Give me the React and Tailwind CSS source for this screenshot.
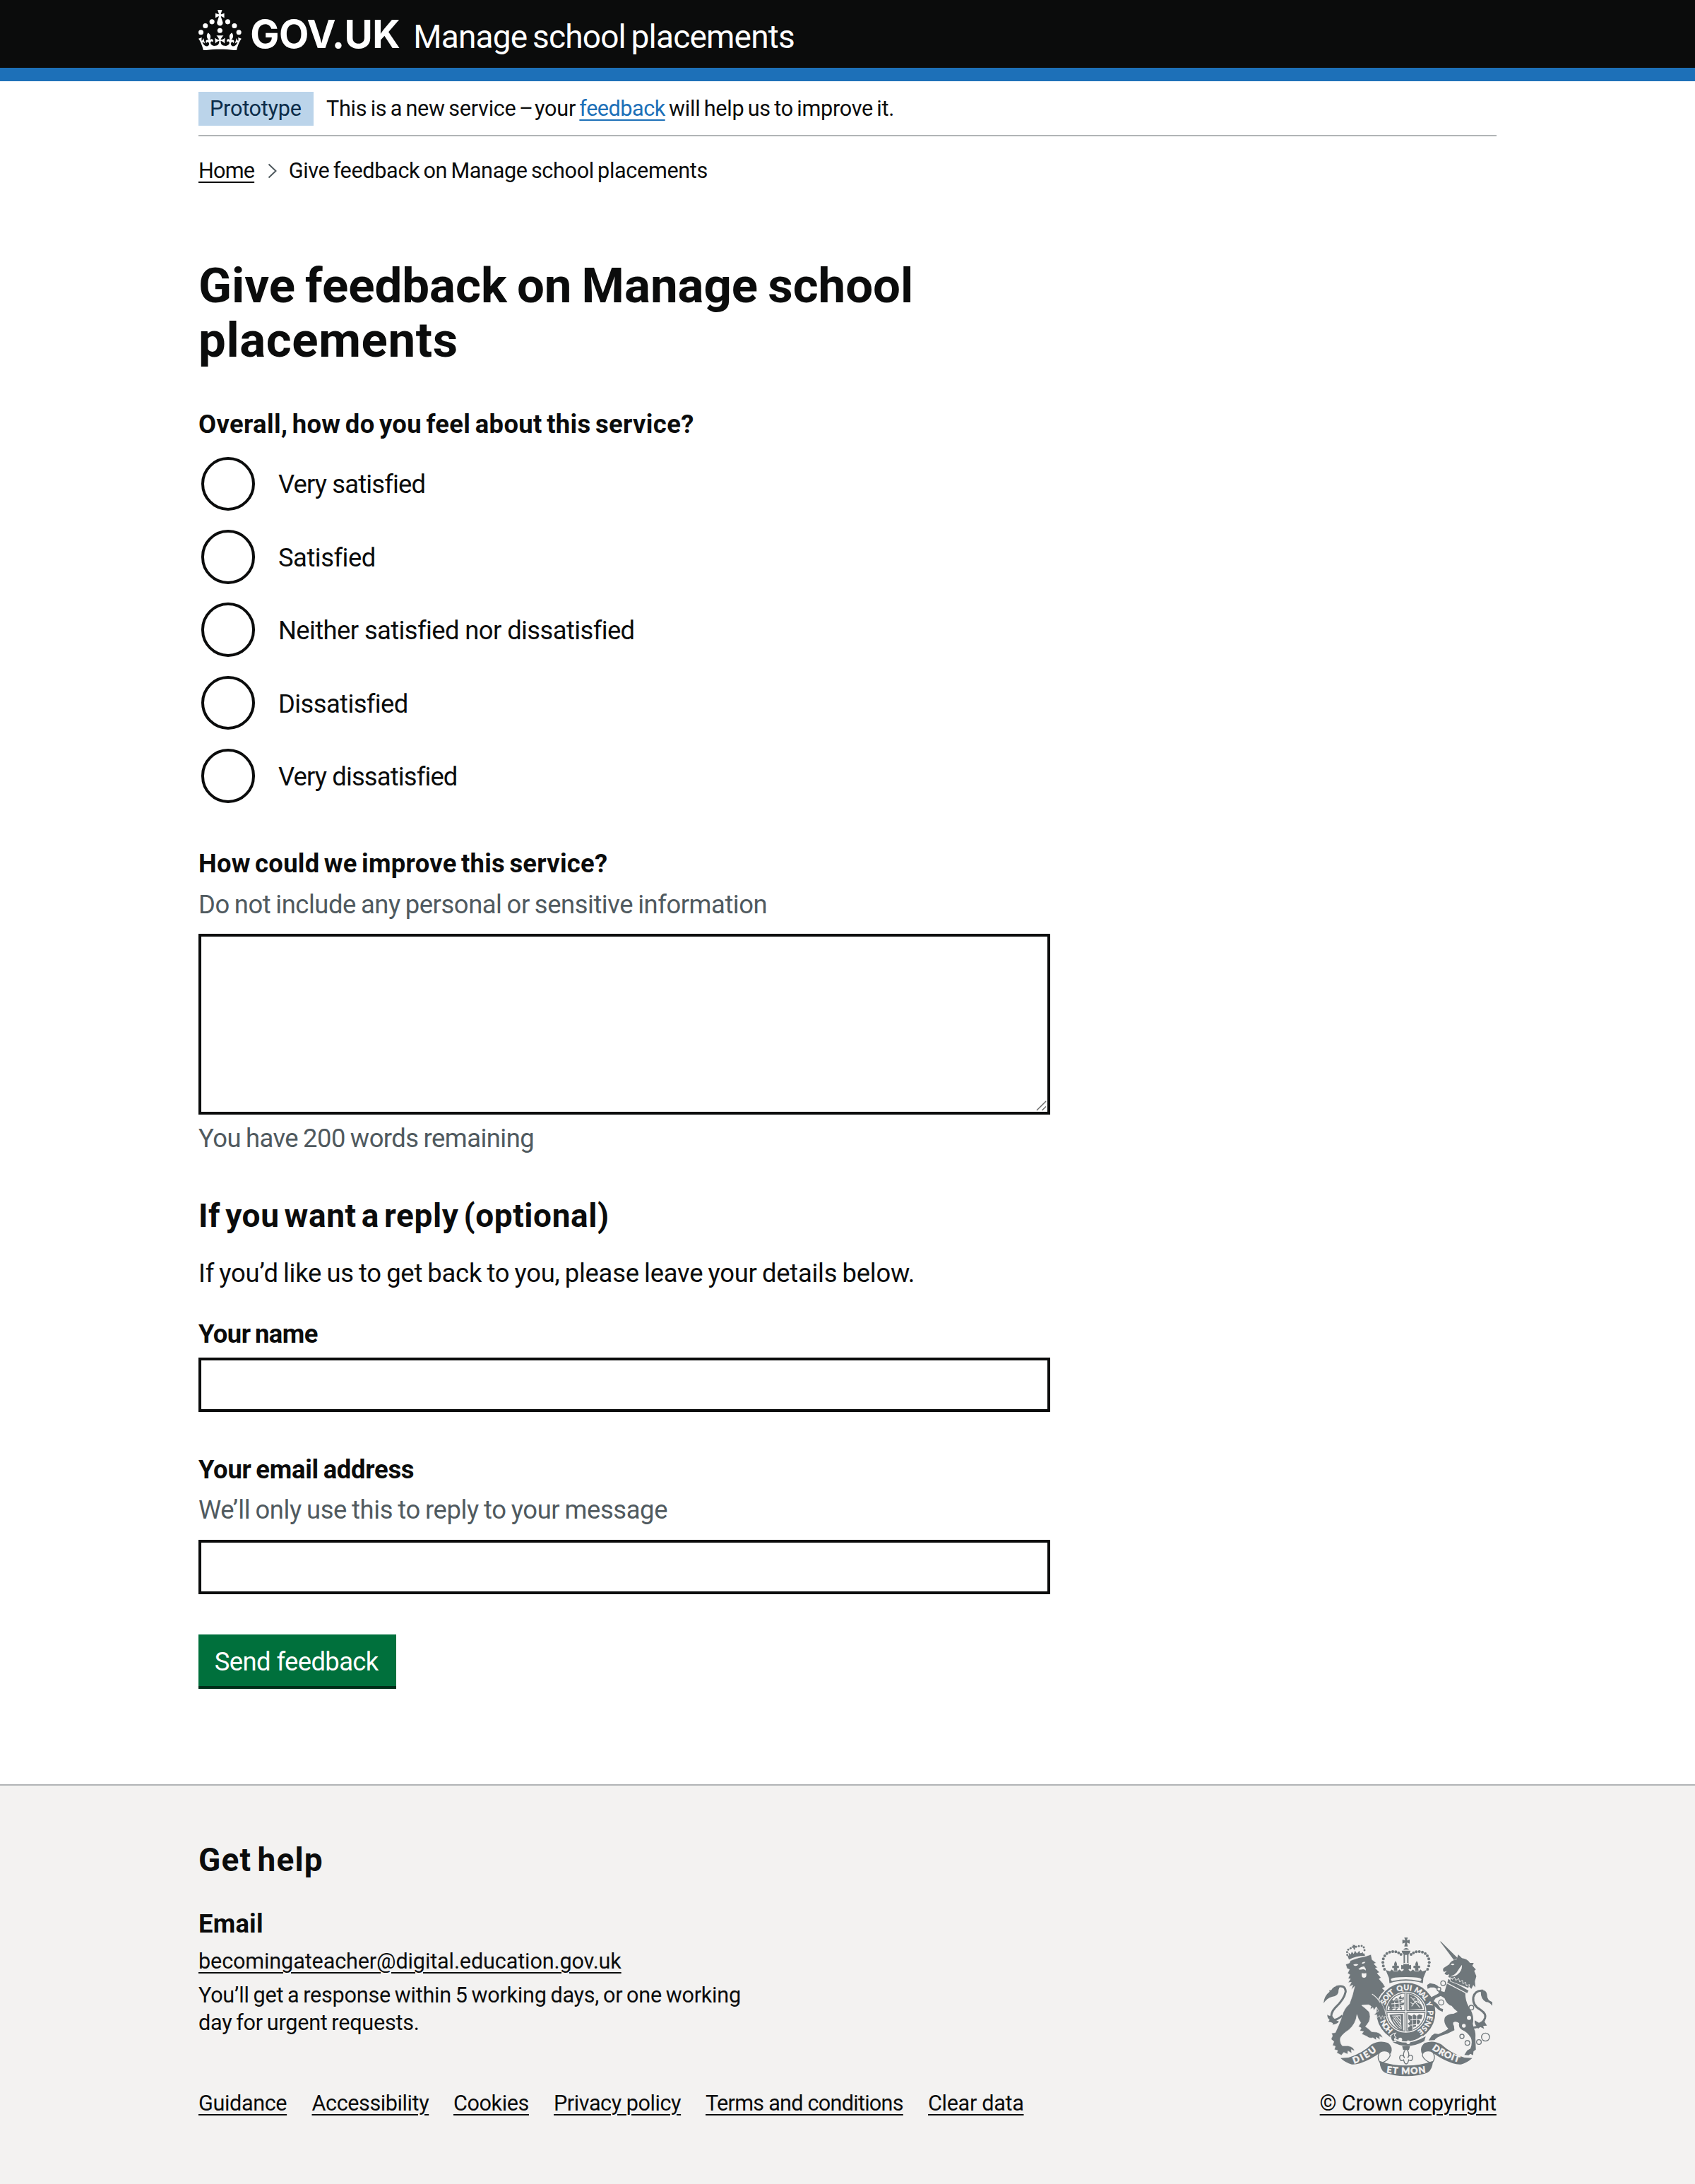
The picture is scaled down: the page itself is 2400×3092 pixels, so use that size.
import React from "react";

const LINK = "underline decoration-2 underline-offset-[5px]";

const CROWN_PATH =
  "M33.1,9.8c.2-.1.3-.3.5-.5l4.6,2.4v-6.8l-4.6,1.5c-.1-.2-.3-.3-.5-.5l1.9-5.9h-6.7l1.9,5.9c-.2.1-.3.3-.5.5l-4.6-1.5v6.8l4.6-2.4c.1.2.3.3.5.5l-2.6,8c-.9,2.8,1.2,5.7,4.1,5.7h0c3,0,5.1-2.9,4.1-5.7l-2.6-8ZM37,37.9s-3.4,3.8-4.1,6.1c2.2,0,4.2-.5,6.4-2.8l-.7,8.5c-2-2.8-4.4-4.1-5.7-3.8.1,3.1.5,6.7,5.8,7.2,3.7.3,6.7-1.5,7-3.8.4-2.6-2-4.3-3.7-1.6-1.4-4.5,2.4-6.1,4.9-3.2-1.9-4.5-1.8-7.7,2.4-10.9,3,4,2.6,7.3-1.2,11.1,2.4-1.3,6.2,0,4,4.6-1.2-2.8-3.7-2.2-4.2.2-.3,1.7.7,3.7,3,4.2,1.9.3,4.7-.9,7-5.9-1.3,0-2.4.7-3.9,1.7l2.4-8c.6,2.3,1.4,3.7,2.2,4.5.6-1.6.5-2.8,0-5.3l5,1.8c-2.6,3.6-5.2,8.7-7.3,17.5-7.4-1.1-15.7-1.7-24.5-1.7h0c-8.8,0-17.1.6-24.5,1.7-2.1-8.9-4.7-13.9-7.3-17.5l5-1.8c-.5,2.5-.6,3.7,0,5.3.8-.8,1.6-2.3,2.2-4.5l2.4,8c-1.5-1-2.6-1.7-3.9-1.7,2.3,5,5.2,6.2,7,5.9,2.3-.4,3.3-2.4,3-4.2-.5-2.4-3-3.1-4.2-.2-2.2-4.6,1.6-6,4-4.6-3.7-3.7-4.2-7.1-1.2-11.1,4.2,3.2,4.3,6.4,2.4,10.9,2.5-2.8,6.3-1.3,4.9,3.2-1.8-2.7-4.1-1-3.7,1.6.3,2.3,3.3,4.1,7,3.8,5.4-.5,5.7-4.2,5.8-7.2-1.3-.2-3.7,1-5.7,3.8l-.7-8.5c2.2,2.3,4.2,2.7,6.4,2.8-.7-2.3-4.1-6.1-4.1-6.1h10.6,0Z";

const CROWN_DOTS = [
  [20, 17.6],
  [10.2, 23.5],
  [3.7, 33.2],
  [31.7, 30.6],
  [43.3, 17.6],
  [53.2, 23.5],
  [59.7, 33.2],
];

function Crown() {
  return (
    <svg viewBox="0 0 64 60" className="h-[57.5px] w-[61.3px] shrink-0 fill-white" aria-hidden="true">
      {CROWN_DOTS.map(([x, y]) => (
        <circle key={`${x}-${y}`} cx={x} cy={y} r="3.7" />
      ))}
      <path d={CROWN_PATH} />
    </svg>
  );
}

const G = "#6f777b";
const L = "#f3f2f1";

const BIG_CROWN_DOTS = [
  [361, 203], [356, 189], [354, 174], [356, 159], [362, 146], [371, 136], [383, 130], [396, 128], [409, 129], [421, 133], [431, 140],
];
const SMALL_CROWN_DOTS = [
  [113, 88], [112, 76], [117, 66], [127, 60], [150, 54], [162, 51], [174, 50], [183, 56], [186, 68],
];
const RINGS = [
  [160, 208, 10], [142, 233, 8], [152, 290, 11], [280, 312, 10], [240, 434, 9], [263, 462, 10], [312, 458, 10], [340, 437, 17],
];

function RoyalArms() {
  return (
    <svg viewBox="102 68 718 590" className="h-[196.7px] w-[239.4px]" aria-hidden="true">
      <defs>
        <path id="garter" d="M452 478 A93 93 0 1 1 452.1 478" />
        <path id="dieu" d="M232 604 Q284 588 336 543" />
        <path id="mon" d="M366 641 Q452 655 540 641" />
        <path id="droit" d="M560 541 Q620 585 690 602" />
      </defs>

      {/* Garter and shield */}
      <circle cx="452" cy="385" r="106" fill="none" stroke={G} strokeWidth="38" />
      <circle cx="452" cy="385" r="81" fill={L} stroke={G} strokeWidth="4" />
      <g fill={G}>
        <path d="M382 345 l10 -14 l8 6 l10 -12 l8 4 l12 -16 l4 12 l10 -6 l-2 14 l-12 6 l6 6 l10 0 l-4 10 l-14 2 l8 8 l-2 10 l-14 -8 l-10 10 l-8 -8 l-12 8 l-10 -4 l4 -10 l-6 -4z" />
        <path d="M464 308 Q505 316 524 372 L464 376z" />
        <path d="M382 396 L440 392 L440 466 Q398 452 382 396z" />
        <path d="M462 396 l16 6 l8 -8 l12 8 l10 -8 l14 4 l-4 16 l-12 2 l8 10 l-10 12 l-10 -6 l2 14 l-12 2 l-2 12 l-18 8 l-4 -16 l10 -8 l-10 -10 l10 -8 l-8 -12z" />
      </g>
      <g fill="none" stroke={L} strokeWidth="3">
        <path d="M472 320 L512 366 M476 360 L494 338 L516 350 M480 330 L492 328 M472 344 L484 352 M500 328 L506 342" />
        <path d="M394 402 L428 400 L432 456 M400 408 L428 446 M404 404 L430 436 M412 402 L430 424 M396 414 Q408 440 428 454" />
        <path d="M390 350 L436 346 M392 364 L434 366 M404 334 L438 330 M470 418 L514 416 M470 440 L506 438 M478 400 L482 462 M498 400 L496 450 M404 340 L406 374 M422 326 L424 372" />
      </g>
      <path d="M452 306 V466 M372 383 H534" stroke={G} strokeWidth="12" />
      <path d="M452 304 V470 M370 383 H536" stroke={L} strokeWidth="4" />
      <g fill={L} stroke={L} strokeWidth="1" fontFamily="Lato, sans-serif" fontWeight="900" fontSize="32">
        <text><textPath href="#garter" startOffset="58" textLength="58">HON</textPath></text>
        <text><textPath href="#garter" startOffset="176" textLength="66">SOIT</textPath></text>
        <text><textPath href="#garter" startOffset="255" textLength="60">QUI</textPath></text>
        <text><textPath href="#garter" startOffset="325" textLength="63">MAL</textPath></text>
        <text><textPath href="#garter" startOffset="396">Y</textPath></text>
        <text><textPath href="#garter" startOffset="431" textLength="102">PENSE</textPath></text>
      </g>
      <path d="M384 484 Q452 540 524 486" fill="none" stroke={L} strokeWidth="5" />
      <path d="M392 496 Q452 536 536 488 L530 508 Q456 548 396 512z" fill={G} />
      <path d="M408 474 Q384 478 388 496 Q392 514 410 510 Q396 500 410 492 Q398 484 408 474z" fill={G} stroke={L} strokeWidth="3" />
      <circle cx="428" cy="501" r="8" fill={L} />
      <circle cx="462" cy="513" r="8" fill={L} />

      {/* Imperial crown */}
      <g fill={G}>
        <path d="M366 206 L384 212 L392 204 L400 212 L416 212 L424 204 L434 212 L446 204 L460 204 L472 212 L482 204 L490 212 L506 212 L514 204 L522 212 L540 206 L526 240 L524 262 Q452 240 382 262 L380 240z" />
        {[408, 498].map((x) => (
          <path key={x} d={`M${x} 168 q9 12 5 20 q9 -3 10 6 q-2 6 -9 4 l2 12 h-16 l2 -12 q-7 2 -9 -4 q1 -9 10 -6 q-4 -8 5 -20z`} />
        ))}
        <path d="M440 178 Q453 184 466 178 Q460 190 474 184 V204 Q460 196 464 212 H442 Q446 196 432 204 V184 Q446 190 440 178z" />
        {BIG_CROWN_DOTS.map(([x, y]) => (
          <React.Fragment key={y + x}>
            <circle cx={x} cy={y} r="6" />
            <circle cx={905 - x} cy={y} r="6" />
          </React.Fragment>
        ))}
        <path d="M442 140 h6 v36 h-6z M457 140 h6 v36 h-6z" />
        <path d="M434 124 h37 q-2 18 -18 18 q-17 0 -19 -18z" />
        <path d="M440 120 q13 -16 26 0z" />
        <path d="M445 68 h15 l-4 13 l12 -4 v17 l-12 -4 l4 16 h-15 l4 -16 l-12 4 v-17 l12 4z" />
      </g>
      <path d="M388 246 Q392 236 452 236 Q514 236 518 246 Q518 256 504 252 Q452 240 400 252 Q388 256 388 246z" fill={L} />

      {/* Lion */}
      <g transform="translate(90 54)">
        <path
          fill={G}
          stroke={L}
          strokeWidth="2"
          d="M106 128 L122 122 L126 112 Q160 98 190 94 L214 86 L218 108 L236 122 L226 126 L242 142 L232 144 L250 162 L240 166 L256 184 L248 190 L264 208 L274 224 L262 230 L272 240 Q256 252 246 274 Q272 310 276 340 L284 352 L272 348 L270 360 L262 346 L256 362 L250 346 L240 354 L238 342 L226 344 L236 332 L246 326 L236 308 L226 324 L222 312 L210 320 L214 306 L204 300 Q190 300 174 302 Q190 314 206 330 Q214 350 206 370 Q196 386 190 392 Q205 402 216 414 L238 416 Q256 420 264 440 L250 434 L252 448 L236 438 L236 450 L222 440 Q206 444 196 434 L174 424 L182 414 L166 410 L172 398 L160 392 L170 376 Q158 360 154 342 Q150 380 120 406 Q92 424 84 440 Q80 460 92 474 L116 474 Q140 478 144 496 L130 490 L132 506 L116 496 L114 510 L98 502 L88 514 L68 504 L72 494 L58 490 L62 476 L50 472 L56 456 L44 446 L50 432 L46 420 L62 418 Q80 380 90 350 Q98 316 122 296 Q136 262 144 222 L130 236 L136 216 L120 224 L130 204 L116 206 L126 190 L116 188 L124 172 L114 166 L122 150 L112 146 Z"
        />
        <path d="M218 254 Q240 268 252 290" fill="none" stroke={L} strokeWidth="3" />
        <path d="M138 130 q12 10 22 -1 q-10 -6 -22 1z M174 124 q10 4 16 -6 q-12 -2 -16 6z M160 148 q10 -10 24 -12 q8 8 8 18 q-8 -8 -18 -4 q-8 2 -14 -2z" fill={L} />
        <ellipse cx="184" cy="172" rx="10" ry="13" fill={L} />
        <path d="M172 160 q12 -6 24 0 l-6 6 h-12z" fill={G} />
        <path d="M114 92 Q150 78 186 82 L188 92 Q150 92 120 108z" fill={G} />
        <path d="M122 94 l-4 -16 l10 8 l4 -12 l8 10 l6 -14 l8 12 l10 -12 l4 12 l12 -6 l-2 14z" fill={G} />
        {SMALL_CROWN_DOTS.map(([x, y]) => (
          <circle key={`${x}-${y}`} cx={x} cy={y} r="4.4" fill={G} />
        ))}
        <path d="M136 44 l6 3 l3 -3 l2 6 l6 -1 l-1 6 l-7 1 l2 8 l-6 2 l-3 -9 l-6 1 l-1 -6 l6 -1z" fill={G} />
        <path d="M66 224 Q104 212 106 244 Q100 276 62 312 Q40 336 46 360 Q60 372 92 346" fill="none" stroke={G} strokeWidth="9" />
        <path d="M12 294 Q14 262 38 244 L36 238 L44 238 Q58 216 82 220 L76 236 Q78 262 48 266 Q26 272 12 294z" fill={G} />
        <path d="M48 346 Q36 350 28 342 Q28 358 38 364 L32 372 Q46 374 52 378 L50 384 Q66 384 78 372 L60 362z" fill={G} />
      </g>

      {/* Unicorn */}
      <g transform="translate(450 54)">
        <path d="M146 30 L152 33 L222 102 L206 110z" fill={G} />
        <path
          fill={G}
          d="M218 106 L224 86 L240 102 Q262 104 274 122 L290 122 L284 134 L299 150 L292 156 L301 178 L295 200 L297 226 L288 216 L280 232 Q256 204 188 184 L182 182 L186 170 Q172 178 166 166 L176 156 L164 160 Q156 154 162 144 L186 128 Q192 112 218 106z"
        />
        <path d="M240 130 Q242 160 214 176 Q200 180 190 180 Q214 172 222 156 Q230 142 240 130z M192 128 q8 -6 16 0 q-6 8 -16 0z" fill={L} />
        <path d="M182 190 L268 240 L262 250 L178 206z" fill={G} />
        <path d="M190 200 l0 -16 l10 8 l8 -10 l6 14 l12 -8 l4 14 l12 -6 l2 14 l12 -6 l2 14 l14 -4 l-4 16z" fill={G} stroke={L} strokeWidth="2.5" />
        <path
          fill={G}
          d="M176 210 L254 250 Q254 284 270 310 Q294 344 286 380 L290 400 Q299 412 297 440 L299 490 L289 498 L287 514 L276 508 L268 514 L250 513 L262 494 L276 486 Q286 460 278 440 Q262 414 240 406 Q224 396 228 378 Q214 368 204 374 Q200 380 206 390 L208 408 Q180 424 150 432 Q130 440 124 450 L98 451 L112 430 L124 422 L140 424 Q170 412 182 402 Q158 376 168 352 Q180 338 204 338 L222 330 Q206 318 196 304 Q176 300 166 272 L150 262 L128 272 L120 284 Q140 296 148 314 L160 318 L158 330 L142 322 L126 308 L118 296 L104 284 L108 268 L132 256 L142 250 Q136 232 122 226 L106 226 L94 232 L92 216 L104 208 L124 212 Q146 222 152 242 L166 246z"
        />
        <path d="M284 396 Q320 400 338 356 Q344 338 320 322 Q284 304 288 268 Q296 236 330 240" fill="none" stroke={G} strokeWidth="9" />
        <path d="M320 238 Q342 236 346 254 Q346 270 354 280 L371 290 L369 304 Q356 288 342 288 Q318 276 320 238z" fill={G} />
        <path d="M294 366 Q292 384 304 392 L308 402 L318 394 L334 402 L330 390 L346 388 L336 372 L340 356 Q320 374 312 376z" fill={G} />
        {RINGS.map(([x, y, r]) => (
          <circle key={`${x}-${y}`} cx={x} cy={y} r={r} fill={L} stroke={G} strokeWidth="4" />
        ))}
        <circle cx="270" cy="355" r="9" fill={L} />
        <circle cx="248" cy="389" r="8" fill={L} />
      </g>

      {/* Motto ribbon */}
      <g stroke={G} strokeWidth="4" fill={L}>
        <path d="M334 574 Q336 548 362 550 Q386 552 385 570 Q378 590 346 602 Q334 592 334 574z" />
        <path d="M573 574 Q571 548 545 550 Q521 552 522 570 Q529 590 561 602 Q573 592 573 574z" />
      </g>
      <g fill={G}>
        <path d="M174 580 L208 578 Q268 560 306 522 Q340 502 376 516 Q400 534 388 562 Q372 546 352 550 Q326 570 300 584 Q250 610 222 607 Q196 600 174 580z" />
        <path d="M734 580 L700 578 Q642 560 602 522 Q568 502 532 516 Q508 534 520 562 Q536 546 556 550 Q582 570 608 584 Q658 610 686 607 Q712 600 734 580z" />
        <path d="M340 592 Q392 612 453 612 Q514 612 567 592 Q564 630 544 642 Q510 657 453 657 Q396 657 362 642 Q342 630 340 592z" />
      </g>
      <g fill={L} stroke={L} strokeWidth="1.5" fontFamily="Lato, sans-serif" fontWeight="900" fontSize="38">
        <text><textPath href="#dieu" startOffset="0" textLength="112">DIEU</textPath></text>
        <text><textPath href="#mon" startOffset="3" textLength="168">ET MON</textPath></text>
        <text><textPath href="#droit" startOffset="2" textLength="128">DROIT</textPath></text>
      </g>

      {/* Plant badge */}
      <path d="M436 530 h33 l-4 16 h-25z" fill={G} />
      <path
        d="M453 540 Q472 562 460 580 Q464 566 476 568 Q486 578 476 590 Q468 592 464 588 L460 600 Q453 610 446 600 L442 588 Q438 592 430 590 Q420 578 430 568 Q442 566 446 580 Q434 562 453 540z"
        fill={L}
        stroke={G}
        strokeWidth="4"
      />
    </svg>
  );
}

const OPTIONS = [
  { label: "Very satisfied", cls: "tracking-[-0.85px]" },
  { label: "Satisfied", cls: "tracking-[-0.5px]" },
  { label: "Neither satisfied nor dissatisfied", cls: "tracking-[-0.6px]" },
  { label: "Dissatisfied", cls: "tracking-[-0.6px]" },
  { label: "Very dissatisfied", cls: "tracking-[-0.86px]" },
];

const FOOTER_LINKS = [
  { label: "Guidance", cls: "w-[125.5px] tracking-[-0.38px]" },
  { label: "Accessibility", cls: "w-[165.5px] tracking-[-0.42px]" },
  { label: "Cookies", cls: "w-[107px] tracking-[-0.4px]" },
  { label: "Privacy policy", cls: "w-[180px] tracking-[-0.45px]" },
  { label: "Terms and conditions", cls: "w-[280px] tracking-[-0.74px]" },
  { label: "Clear data", cls: "w-[136px] tracking-[-0.32px]" },
];

export default function App() {
  return (
    <div className="flex min-h-[3092px] w-[2400px] flex-col bg-white font-[Roboto,sans-serif] text-[36.4px] leading-[48px] text-[#0b0c0c]">
      <header className="h-[115px] border-b-[19px] border-[#1d70b8] bg-[#0b0c0c] text-white">
        <div className="mx-auto flex w-[1838px] items-start pt-[13.5px]">
          <Crown />
          <span className="ml-[12px] mt-[2px] w-[217px] font-[Inter,sans-serif] text-[55px] font-bold leading-[64px] tracking-[-0.6px]">
            GOV.UK
          </span>
          <span className="ml-[14px] mt-[13.5px] whitespace-nowrap text-[46px] leading-[50px] tracking-[-0.8px] [word-spacing:-3px]">
            Manage school placements
          </span>
        </div>
      </header>

      <div className="mx-auto flex w-[1838px] grow flex-col items-start whitespace-nowrap">
        <div className="flex h-[78px] w-full items-start border-b-2 border-[#b1b4b6] pt-[15px] text-[30.6px] leading-[40px]">
          <strong className="h-[48px] w-[163px] bg-[#bbd4ea] pl-[16px] pt-[4px] font-normal tracking-[-0.23px] text-[#0c2d4a]">
            Prototype
          </strong>
          <p className="ml-[18px] mt-[4px] tracking-[-0.25px] [word-spacing:-2px]">
            This is a new service <span className="-ml-px -mr-[3px]">–</span> your{" "}
            <a className={`${LINK} tracking-[-0.5px] text-[#1d70b8]`}>feedback</a> will help us to improve it.
          </p>
        </div>

        <nav className="mt-[28.5px] flex h-[40px] items-center text-[30.6px] leading-[40px]">
          <a className={`${LINK} tracking-[-0.8px]`}>Home</a>
          <svg viewBox="0 0 14 22" className="ml-[18.5px] h-[22px] w-[14px]" fill="none" stroke="#505a5f" strokeWidth="2">
            <path d="M1.5 1.5 L11.5 11 L1.5 20.5" />
          </svg>
          <span className="ml-[16px] tracking-[-0.34px] [word-spacing:-2px]">Give feedback on Manage school placements</span>
        </nav>

        <h1 className="mt-[105.5px] text-[69px] font-bold leading-[76.6px] tracking-[-0.02px] [word-spacing:-3px]">
          Give feedback on Manage school
          <br />
          <span className="tracking-[0.6px]">placements</span>
        </h1>

        <h2 className="mt-[57px] font-bold tracking-[0.36px] [word-spacing:-3px]">Overall, how do you feel about this service?</h2>
        <div className="mt-[21.5px] flex flex-col gap-[26.8px]">
          {OPTIONS.map((o) => (
            <label key={o.label} className="flex h-[76.6px] items-center">
              <span className="ml-[3.6px] h-[76.6px] w-[76.6px] shrink-0 rounded-full border-4 border-[#0b0c0c]" />
              <span className={`ml-[32.8px] mt-[3px] ${o.cls}`}>{o.label}</span>
            </label>
          ))}
        </div>

        <h2 className="mt-[62.4px] font-bold tracking-[0.28px] [word-spacing:-3px]">How could we improve this service?</h2>
        <p className="mt-[9.6px] tracking-[-0.45px] text-[#505a5f] [word-spacing:-1.5px]">
          Do not include any personal or sensitive information
        </p>
        <div className="mt-[17.4px] flex h-[255.5px] w-[1206px] items-end justify-end border-4 border-[#0b0c0c]">
          <svg viewBox="0 0 16 16" className="mb-px mr-px h-[15px] w-[15px]" fill="none" stroke="#6c6c6c" strokeWidth="1.6">
            <path d="M1 15 L15 1 M9 15 L15 9" />
          </svg>
        </div>
        <p className="mt-[10.2px] tracking-[-0.53px] text-[#505a5f] [word-spacing:-1.5px]">You have 200 words remaining</p>

        <h2 className="mt-[56px] text-[46px] font-bold leading-[58px] tracking-[0.6px] [word-spacing:-5px]">
          If you want a reply (optional)
        </h2>
        <p className="mt-[29.5px] tracking-[-0.24px] [word-spacing:-1.5px]">
          If you’d like us to get back to you, please leave your details below.
        </p>

        <h3 className="mt-[38px] font-bold tracking-[-0.55px] [word-spacing:-2px]">Your name</h3>
        <div className="mt-[8.8px] h-[76.5px] w-[1206px] border-4 border-[#0b0c0c]" />

        <h3 className="mt-[58.1px] font-bold tracking-[-0.27px] [word-spacing:-2px]">Your email address</h3>
        <p className="mt-[9.7px] tracking-[-0.38px] text-[#505a5f] [word-spacing:-1.5px]">
          We’ll only use this to reply to your message
        </p>
        <div className="mt-[17.9px] h-[77px] w-[1206px] border-4 border-[#0b0c0c]" />

        <button className="mt-[56.8px] flex h-[77px] w-[279.5px] items-start justify-center border-b-4 border-[#002d18] bg-[#00703c] pr-[2px] pt-[14.5px] tracking-[-0.6px] text-white">
          Send feedback
        </button>
      </div>

      <footer className="h-[566.5px] border-t-2 border-[#b1b4b6] bg-[#f3f2f1]">
        <div className="mx-auto flex h-[469.5px] w-[1838px] items-end justify-between whitespace-nowrap text-[30.6px] leading-[38.3px]">
          <div className="flex flex-col items-start">
            <h2 className="text-[46px] font-bold leading-[58px] tracking-[1.1px] [word-spacing:-4px]">Get help</h2>
            <h3 className="mt-[37.8px] text-[36.4px] font-bold leading-[48px] tracking-[0.2px]">Email</h3>
            <a className={`mt-[9.9px] ${LINK} tracking-[-0.13px]`}>becomingateacher@digital.education.gov.uk</a>
            <p className="mt-[10.1px] tracking-[-0.25px] [word-spacing:-1.5px]">
              You’ll get a response within 5 working days, or one working
              <br />
              day for urgent requests.
            </p>
            <div className="mt-[75.7px] flex gap-[35px]">
              {FOOTER_LINKS.map((l) => (
                <a key={l.label} className={`${LINK} ${l.cls}`}>
                  {l.label}
                </a>
              ))}
            </div>
          </div>
          <div className="flex w-[250.5px] flex-col items-center">
            <RoyalArms />
            <a className={`mt-[19px] ${LINK} tracking-[-0.18px]`}>© Crown copyright</a>
          </div>
        </div>
      </footer>
    </div>
  );
}
